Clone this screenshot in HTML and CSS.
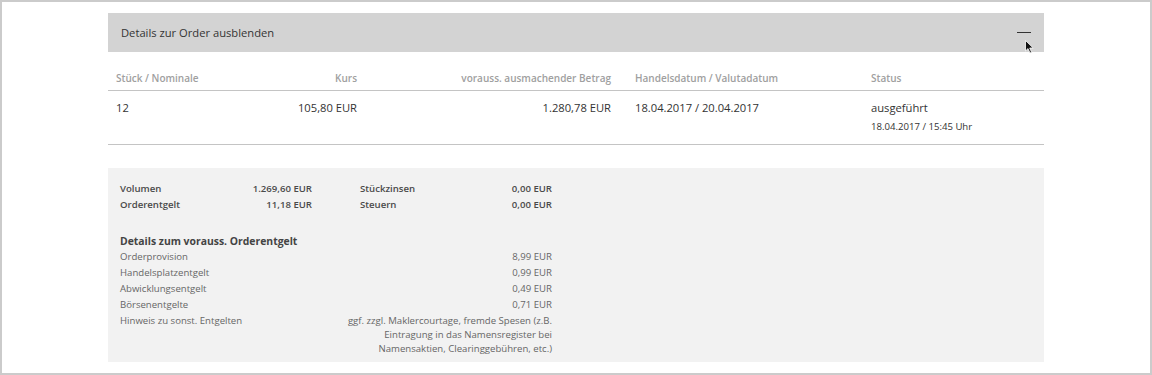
FILE: index.html
```html
<!DOCTYPE html>
<html lang="de">
<head>
<meta charset="utf-8">
<title>Order Details</title>
<link rel="stylesheet" href="styles.css">
</head>
<body>
<div class="frame">
  <div class="toggle">
    <span class="toggle-label">Details zur Order ausblenden</span>
    <span class="minus"></span>
    <svg class="cursor" width="10" height="14" viewBox="0 0 10 14"><path d="M0.5 0.5 L0.5 11 L3 8.6 L5 13 L6.6 12.3 L4.7 8 L8.2 8 Z" fill="#111" stroke="#fff" stroke-width="0.8"/></svg>
  </div>
  <div class="orders">
    <div class="grid head">
      <div>Stück / Nominale</div>
      <div class="r">Kurs</div>
      <div class="r">vorauss. ausmachender Betrag</div>
      <div class="c4">Handelsdatum / Valutadatum</div>
      <div>Status</div>
    </div>
    <div class="grid row">
      <div>12</div>
      <div class="r">105,80 EUR</div>
      <div class="r">1.280,78 EUR</div>
      <div class="c4">18.04.2017 / 20.04.2017</div>
      <div>ausgeführt<div class="sub">18.04.2017 / 15:45 Uhr</div></div>
    </div>
  </div>
  <div class="details">
    <div class="summary">
      <div class="kv"><span>Volumen</span><span>1.269,60 EUR</span></div>
      <div class="kv"><span>Stückzinsen</span><span>0,00 EUR</span></div>
      <div class="kv"><span>Orderentgelt</span><span>11,18 EUR</span></div>
      <div class="kv"><span>Steuern</span><span>0,00 EUR</span></div>
    </div>
    <div class="fees-title">Details zum vorauss. Orderentgelt</div>
    <div class="fees">
      <div class="fee"><span>Orderprovision</span><span>8,99 EUR</span></div>
      <div class="fee"><span>Handelsplatzentgelt</span><span>0,99 EUR</span></div>
      <div class="fee"><span>Abwicklungsentgelt</span><span>0,49 EUR</span></div>
      <div class="fee"><span>Börsenentgelte</span><span>0,71 EUR</span></div>
      <div class="fee"><span>Hinweis zu sonst. Entgelten</span><span class="note">ggf. zzgl. Maklercourtage, fremde Spesen (z.B.<br>Eintragung in das Namensregister bei<br>Namensaktien, Clearinggebühren, etc.)</span></div>
    </div>
  </div>
</div>
</body>
</html>
```

FILE: styles.css
```css
html, body {
  margin: 0;
  padding: 0;
  background: #fff;
}
body {
  font-family: "Open Sans", "Liberation Sans", sans-serif;
  color: #333;
}
.frame {
  box-sizing: border-box;
  width: 1152px;
  height: 375px;
  border: 2px solid #cbcbcb;
  padding: 11px 106px 0;
}
.toggle {
  position: relative;
  height: 39px;
  background: #d3d3d3;
  display: flex;
  align-items: center;
  justify-content: space-between;
  padding: 0 13px 0 13px;
}
.toggle-label {
  font-size: 11.2px;
  color: #333;
}
.minus {
  width: 14px;
  height: 1px;
  background: #333;
}
.cursor {
  position: absolute;
  left: 917px;
  top: 27px;
}
.grid {
  display: grid;
  grid-template-columns: 150px 91px 254px 260px 1fr;
  padding-left: 8px;
  border-bottom: 1px solid #c4c4c4;
}
.grid .r { text-align: right; }
.grid .c4 { padding-left: 24px; }
.head {
  font-size: 10px;
  font-weight: 600;
  color: #a0a0a0;
  line-height: 16px;
  padding-top: 18px;
  padding-bottom: 4px;
}
.row {
  font-size: 11.2px;
  line-height: 18px;
  padding-top: 8px;
  padding-bottom: 9px;
  color: #333;
}
.sub {
  font-size: 9.6px;
  line-height: 16px;
  margin-top: 2px;
}
.details {
  margin-top: 23px;
  background: #f2f2f2;
  height: 194px;
  box-sizing: border-box;
  padding: 13px 12px 0;
  font-size: 9.6px;
  line-height: 16px;
}
.summary {
  display: grid;
  grid-template-columns: 192px 192px;
  column-gap: 48px;
  font-weight: 600;
  color: #4a4a4a;
}
.kv, .fee {
  display: flex;
  justify-content: space-between;
}
.fees-title {
  margin-top: 20px;
  font-size: 10.4px;
  font-weight: 700;
  color: #444;
}
.fees {
  width: 432px;
  color: #666;
}
.note {
  text-align: right;
  line-height: 14px;
  padding-top: 1px;
}
```
